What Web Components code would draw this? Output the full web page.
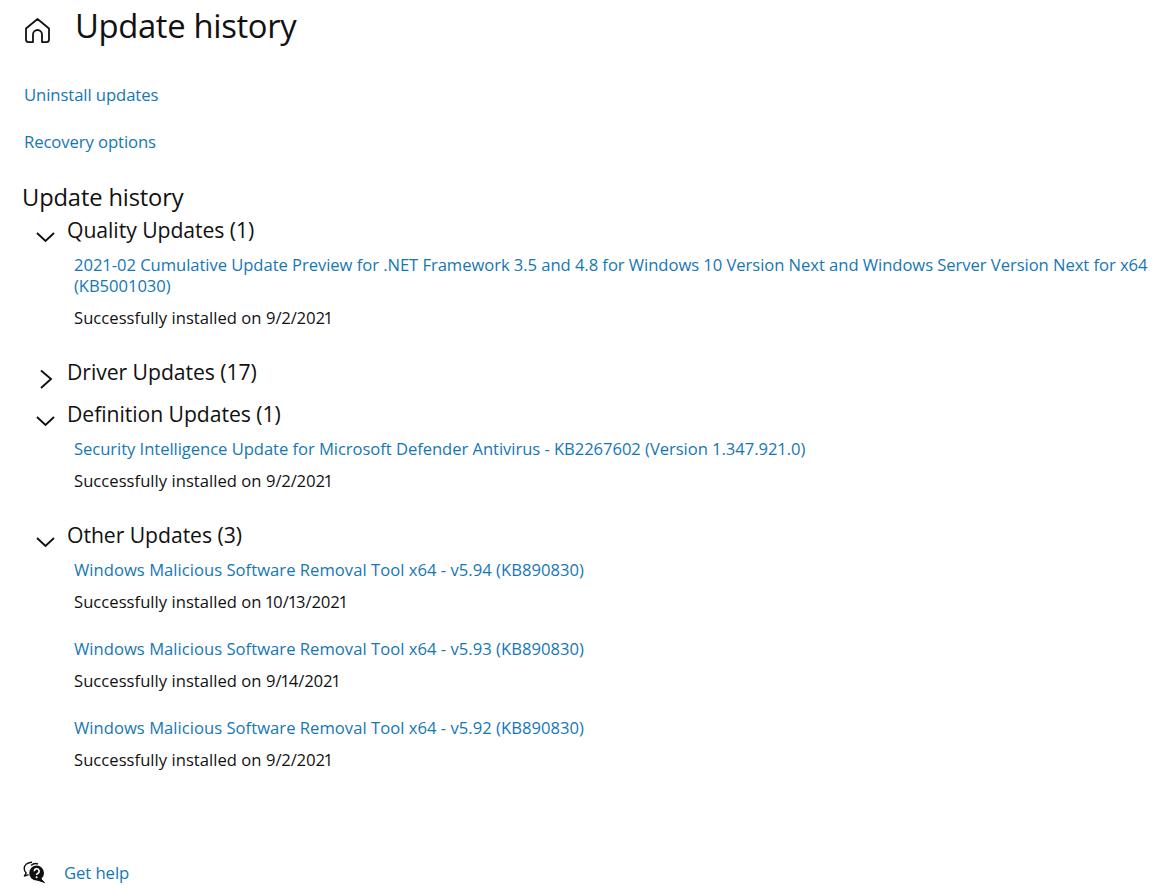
<!DOCTYPE html>
<html><head><meta charset="utf-8"><style>
html,body{margin:0;background:#fff}
body{width:1176px;height:888px;overflow:hidden;font-family:"Open Sans","Noto Sans",sans-serif;color:#000}
</style></head><body>
<uh-page>
<uh-header slot="header">Update history</uh-header>
<uh-link>Uninstall updates</uh-link>
<uh-link>Recovery options</uh-link>
<uh-section>Update history</uh-section>
<uh-group title="Quality Updates (1)" open>
<uh-item status="Successfully installed on 9/2/2021">2021-02 Cumulative Update Preview for .NET Framework 3.5 and 4.8 for Windows 10 Version Next and Windows Server Version Next for x64 (KB5001030)</uh-item>
</uh-group>
<uh-group title="Driver Updates (17)"></uh-group>
<uh-group title="Definition Updates (1)" open>
<uh-item status="Successfully installed on 9/2/2021">Security Intelligence Update for Microsoft Defender Antivirus - KB2267602 (Version 1.347.921.0)</uh-item>
</uh-group>
<uh-group title="Other Updates (3)" open>
<uh-item wide status="Successfully installed on 10/13/2021">Windows Malicious Software Removal Tool x64 - v5.94 (KB890830)</uh-item>
<uh-item wide status="Successfully installed on 9/14/2021">Windows Malicious Software Removal Tool x64 - v5.93 (KB890830)</uh-item>
<uh-item wide status="Successfully installed on 9/2/2021">Windows Malicious Software Removal Tool x64 - v5.92 (KB890830)</uh-item>
</uh-group>
<uh-help>Get help</uh-help>
</uh-page>
<script>
function def(name, html, init){
  customElements.define(name, class extends HTMLElement{
    constructor(){super();this.attachShadow({mode:'open'}).innerHTML=html;}
    connectedCallback(){ if(init) init(this); }
  });
}
const F='font-family:"Open Sans","Noto Sans",sans-serif;';
const LINK='#1577b5';
def('uh-page',`<style>:host{display:block;width:1176px;height:888px;box-sizing:border-box}</style><slot name="header"></slot><slot></slot>`);
def('uh-header',`<style>:host{display:flex;align-items:center;height:52px;${F}font-size:32.8px;letter-spacing:-.35px;color:#111}
svg{display:block;margin-left:24px;margin-top:8px;margin-right:24px}span{margin-top:-2px}</style>
<svg width="27" height="27" viewBox="0 0 27 27" fill="none" stroke="#111" stroke-width="1.8" stroke-linejoin="round" stroke-linecap="round"><path d="M2 11.5 13.5 2 25 11.5V22.5a2.6 2.6 0 0 1-2.6 2.6H18V17.5a4.5 4.5 0 0 0-9 0v7.6H4.6A2.6 2.6 0 0 1 2 22.5Z"/></svg><span><slot></slot></span>`);
def('uh-link',`<style>:host{display:block;margin:0 0 26px 24px;height:21px;line-height:21px;${F}font-size:16.7px;letter-spacing:-.1px;color:${LINK}}:host(:first-of-type){margin-top:32px}</style><slot></slot>`);
def('uh-section',`<style>:host{display:block;margin:30px 0 2px 22px;height:30px;line-height:30px;${F}font-size:23.7px;letter-spacing:-.13px;color:#111}</style><slot></slot>`);
def('uh-group',`<style>:host{display:block;margin-bottom:12px}
.h{display:flex;height:30px;align-items:center;${F}font-size:21.2px;letter-spacing:-.06px;color:#111}
.c{width:67px;flex:none;position:relative;height:30px}
svg{position:absolute;left:34px;top:12px}
.b{padding:10px 0 16px 74px}.b:empty{display:none}</style>
<div class="h"><div class="c"><svg width="22" height="22" viewBox="0 0 22 22" fill="none" stroke="#111" stroke-width="1.9"></svg></div><span></span></div><div class="b"><slot></slot></div>`,el=>{
  const s=el.shadowRoot;s.querySelector('span').textContent=el.getAttribute('title');
  const open=el.hasAttribute('open');
  s.querySelector('svg').innerHTML=open?'<path d="M3 7 11.5 15 20 7"/>':'<path d="M7 2.5 17 11 7 20"/>';
  if(!open)s.querySelector('.b').style.display='none';
});
def('uh-item',`<style>:host{display:block;margin-bottom:26px;${F}font-size:16.6px;letter-spacing:-.05px;line-height:21px}:host(:last-child){margin-bottom:0}
:host([wide]) .l{letter-spacing:.03px}
.l{color:${LINK};margin-right:20px}.s{margin-top:11px;color:#111;font-variant-numeric:proportional-nums;letter-spacing:.03px}</style><div class="l"><slot></slot></div><div class="s"></div>`,el=>{el.shadowRoot.querySelector('.s').textContent=el.getAttribute('status');});
def('uh-help',`<style>:host{display:flex;align-items:center;height:24px;margin-top:74px;padding-left:23px;${F}font-size:16.7px;letter-spacing:-.08px;color:${LINK}}
svg{display:block;margin-right:18px}</style>
<svg width="23" height="23" viewBox="0 0 23 23"><path d="M9 1.2C4.6 1.2 1.2 4 1.2 7.6c0 1.7.7 3.2 2 4.3L1.4 15l4.2-1.4" fill="#fff" stroke="#111" stroke-width="1.4" stroke-linejoin="round"/><path d="M8 4.5A7 7 0 0 1 15 3" fill="none" stroke="#111" stroke-width="1.4"/><circle cx="13.6" cy="12" r="7.4" fill="#111"/><path d="M17.5 17.5 21.5 21.5 14 19Z" fill="#111" stroke="#111" stroke-width="1" stroke-linejoin="round"/><path d="M11.3 10.2a2.4 2.4 0 1 1 3.4 2.2c-.8.4-1.1.8-1.1 1.6" fill="none" stroke="#fff" stroke-width="1.6"/><circle cx="13.6" cy="16.2" r="1" fill="#fff"/></svg><slot></slot>`);
</script>
</body></html>
